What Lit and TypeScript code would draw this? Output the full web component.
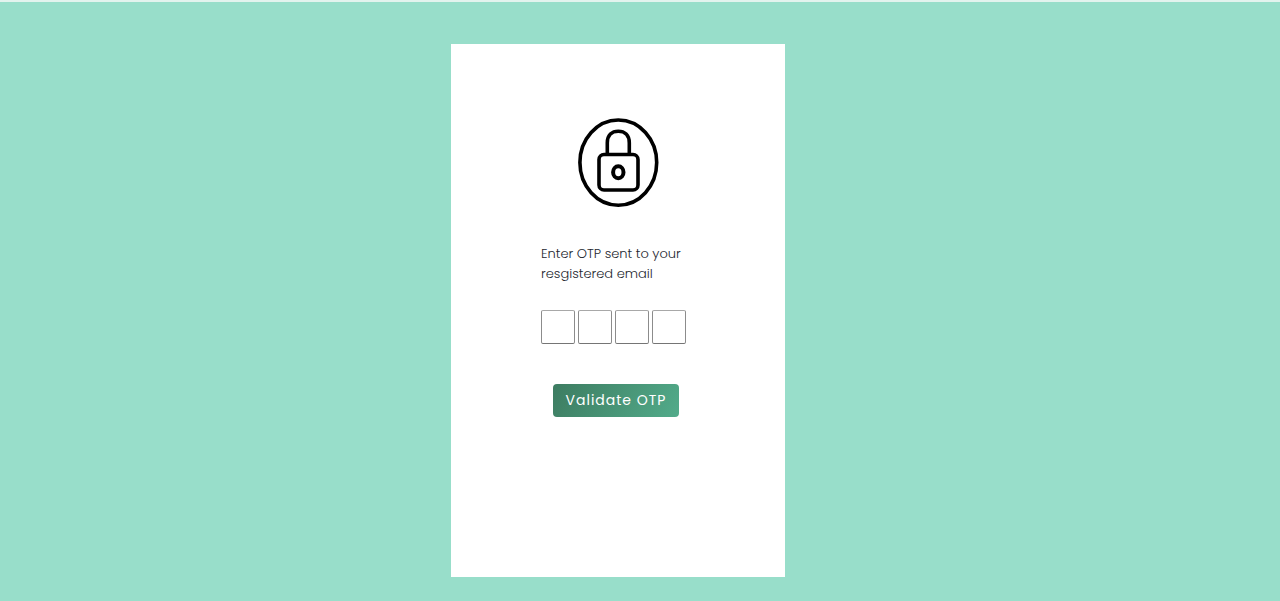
import { LitElement, html, css } from "lit";
import { customElement } from "lit/decorators.js";

@customElement("app-root")
export class AppRoot extends LitElement {
  static styles = css`
    :host {
      display: block;
      font-family: Poppins, Inter, "Open Sans", sans-serif;
    }
    * {
      box-sizing: border-box;
    }
    .page {
      display: flex;
      justify-content: center;
      min-height: 100vh;
      padding: 42px 44px 24px 0;
      border-top: 2px solid #e3f3ee;
      background: #98deca;
    }
    .card {
      display: flex;
      flex-direction: column;
      align-items: center;
      width: 334px;
      max-width: 100%;
      padding: 74px 24px 160px;
      background: #fff;
    }
    .lock {
      display: block;
      width: 82px;
      height: 90px;
    }
    .form {
      display: flex;
      flex-direction: column;
      align-items: flex-start;
      width: 154px;
      margin-top: 36px;
    }
    .prompt {
      margin: 0;
      font-size: 13px;
      line-height: 20px;
      font-weight: 290;
      color: #24272f;
    }
    .digits {
      display: flex;
      gap: 3px;
      margin: 26px 0 40px;
      padding: 0;
      border: 0;
    }
    .digit {
      width: 34px;
      height: 34px;
      margin: 0;
      padding: 0;
      border: 1px solid #8c8c8c;
      border-top-color: #a8a8a8;
      border-bottom-color: #757575;
      border-radius: 2px;
      background: #fff;
      font: inherit;
      text-align: center;
    }
    .submit {
      width: 126px;
      height: 33px;
      margin-left: 12px;
      padding: 0 0 2px;
      border: 0;
      border-radius: 4px;
      background: linear-gradient(120deg, #3d7c61, #52ab8a);
      color: #fff;
      font: 400 14px/20px Poppins, Inter, "Open Sans", sans-serif;
      letter-spacing: 1px;
      white-space: nowrap;
      cursor: pointer;
    }
  `;

  render() {
    return html`
      <main class="page">
        <section class="card">
          <svg class="lock" viewBox="0 0 82 90" fill="none" stroke="#000" stroke-width="3.6" aria-hidden="true">
            <ellipse cx="41.300" cy="44.600" rx="38.400" ry="42.600" />
            <path d="M30.300 35.500V25C30.300 17 35 13.300 41.300 13.300S52.300 17 52.300 25V35.500" />
            <rect x="22" y="36.500" width="39" height="35.500" rx="5" />
            <ellipse cx="41.300" cy="54.300" rx="5.200" ry="6" stroke-width="4" />
          </svg>
          <form class="form" @submit=${(e: Event) => e.preventDefault()}>
            <p class="prompt" id="prompt">Enter OTP sent to your resgistered email</p>
            <fieldset class="digits" aria-labelledby="prompt">
              ${[1, 2, 3, 4].map(
                (n) => html`<input class="digit" type="text" inputmode="numeric" maxlength="1" aria-label="Digit ${n}" />`
              )}
            </fieldset>
            <button class="submit" type="submit">Validate OTP</button>
          </form>
        </section>
      </main>
    `;
  }
}
